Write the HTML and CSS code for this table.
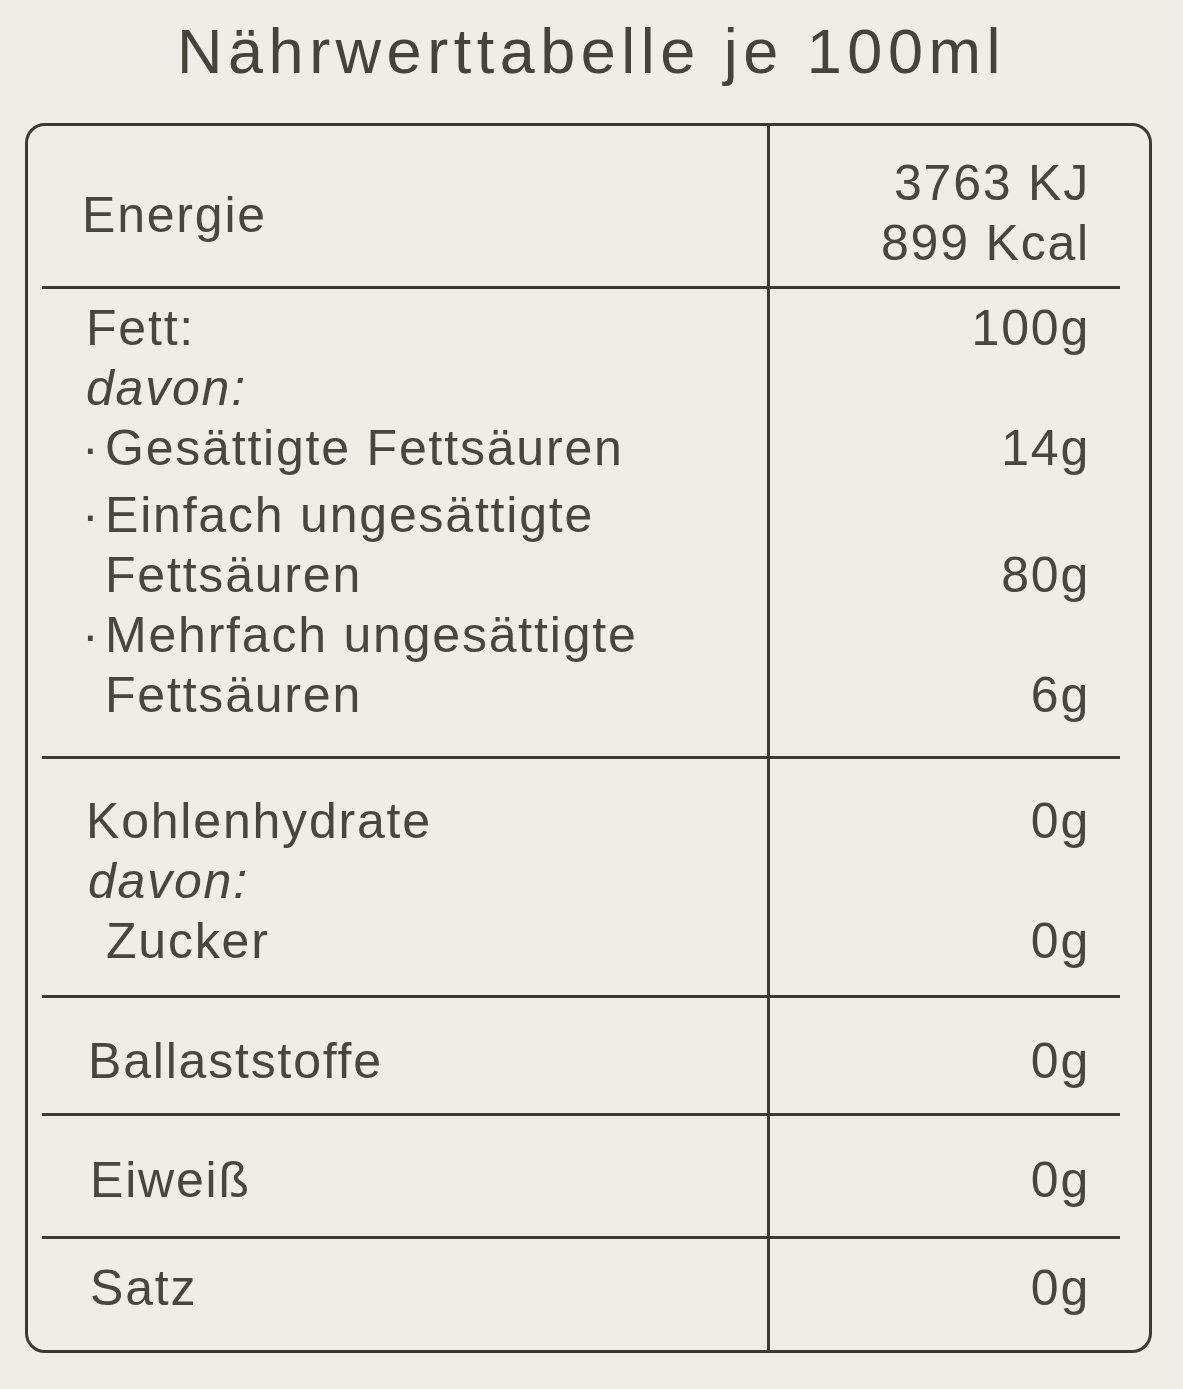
FILE: index.html
```html
<!DOCTYPE html>
<html lang="de">
<head>
<meta charset="utf-8">
<title>Nährwerttabelle je 100ml</title>
<link rel="stylesheet" href="styles.css">
</head>
<body>
<h1 class="title">Nährwerttabelle je 100ml</h1>
<div class="table">
  <div class="row row-energy">
    <div class="line">
      <span class="label label-energy">Energie</span>
      <span class="value"><span class="vline">3763 KJ</span><span class="vline">899 Kcal</span></span>
    </div>
  </div>
  <div class="rule"></div>
  <div class="row row-fat">
    <div class="line"><span class="label">Fett:</span><span class="value">100g</span></div>
    <div class="line"><span class="label sub">davon:</span></div>
    <div class="line"><span class="label item"><span class="dot">·</span>Gesättigte Fettsäuren</span><span class="value">14g</span></div>
    <div class="line gap"><span class="label item"><span class="dot">·</span>Einfach ungesättigte</span></div>
    <div class="line"><span class="label item cont">Fettsäuren</span><span class="value">80g</span></div>
    <div class="line"><span class="label item"><span class="dot">·</span>Mehrfach ungesättigte</span></div>
    <div class="line"><span class="label item cont">Fettsäuren</span><span class="value">6g</span></div>
  </div>
  <div class="rule"></div>
  <div class="row row-carb">
    <div class="line"><span class="label">Kohlenhydrate</span><span class="value">0g</span></div>
    <div class="line"><span class="label sub">davon:</span></div>
    <div class="line"><span class="label sugar">Zucker</span><span class="value">0g</span></div>
  </div>
  <div class="rule"></div>
  <div class="row row-fibre">
    <div class="line"><span class="label">Ballaststoffe</span><span class="value">0g</span></div>
  </div>
  <div class="rule"></div>
  <div class="row row-protein">
    <div class="line"><span class="label">Eiweiß</span><span class="value">0g</span></div>
  </div>
  <div class="rule"></div>
  <div class="row row-salt">
    <div class="line"><span class="label">Satz</span><span class="value">0g</span></div>
  </div>
</div>
</body>
</html>
```
FILE: styles.css
```css
html, body {
  margin: 0;
  padding: 0;
  background: #eeeee7;
}

body {
  width: 1183px;
  height: 1389px;
  overflow: hidden;
  color: #47473e;
  font-family: "Liberation Sans", Arial, sans-serif;
}

.title {
  margin: 11px 0 0 0;
  font-family: "Liberation Sans", Arial, sans-serif;
  font-weight: normal;
  font-size: 63px;
  line-height: 80px;
  letter-spacing: 5.5px;
  text-align: center;
  color: #45443a;
}

.table {
  margin: 32px 0 0 25px;
  width: 1121px;
  border: 3px solid #3b3b33;
  border-radius: 20px;
  background: linear-gradient(to right,
    transparent 739px, #3b3b33 739px, #3b3b33 742px, transparent 742px);
  font-size: 50px;
  letter-spacing: 1.8px;
}

.rule {
  height: 3px;
  margin: 0 29px 0 14px;
  background: #3b3b33;
}

.row {
  display: flex;
  flex-direction: column;
  padding-left: 54px;
  padding-right: 59px;
}

.line {
  display: grid;
  grid-template-columns: 1fr auto;
  line-height: 60px;
  height: 60px;
}

.value {
  text-align: right;
}

.vline {
  display: block;
}

.row-energy {
  padding-top: 27px;
  padding-bottom: 13px;
}

.row-energy .line {
  height: auto;
}

.label-energy {
  padding-top: 32px;
}

.row-fat {
  padding-top: 9px;
  padding-bottom: 31px;
}

.row-fat .label {
  padding-left: 4px;
}

.sub {
  font-style: italic;
}

.row-fat .sub {
  padding-left: 4px;
}

.row-fat .item {
  display: flex;
  padding-left: 0;
}

.dot {
  display: inline-block;
  width: 23px;
}

.row-fat .cont {
  padding-left: 23px;
}

.gap {
  margin-top: 7px;
}

.row-carb {
  padding-top: 32px;
  padding-bottom: 24px;
  padding-left: 58px;
}

.row-carb .sub {
  padding-left: 2px;
}

.sugar {
  padding-left: 20px;
}

.row-fibre {
  padding-top: 33px;
  padding-bottom: 22px;
  padding-left: 60px;
}

.row-protein {
  padding-top: 34px;
  padding-bottom: 26px;
  padding-left: 62px;
}

.row-salt {
  padding-top: 19px;
  padding-bottom: 32px;
  padding-left: 62px;
}
```
